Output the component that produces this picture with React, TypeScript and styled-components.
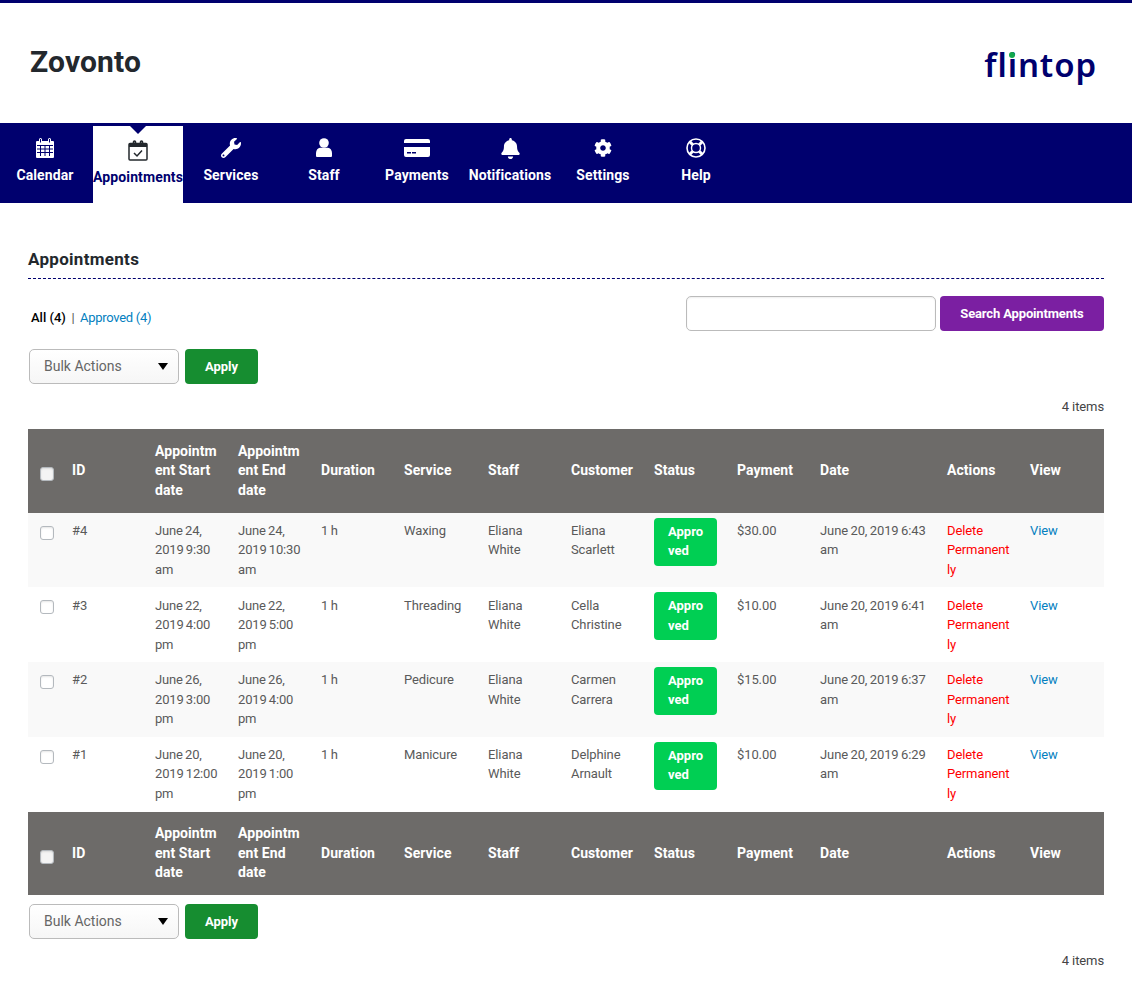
import React from 'react';
import styled, { createGlobalStyle } from 'styled-components';
import { FaBell, FaCog, FaWrench } from 'react-icons/fa';

const NAVY = '#00006e';
const LINK = '#0480c0';

const GlobalStyle = createGlobalStyle`
    html, body {
        margin: 0;
        padding: 0;
        background: #fff;
        font-family: Roboto, "Liberation Sans", sans-serif;
    }
`

const Page = styled.div`
    width: 1132px;
`

const Header = styled.header`
    height: 120px;
    border-top: 3px solid ${NAVY};
    display: flex;
    justify-content: space-between;
    align-items: flex-start;
    padding: 0 35px 0 30px;
    box-sizing: content-box;
    width: 1067px;
`

const Title = styled.h1`
    margin: 41px 0 0;
    font-size: 30px;
    line-height: 36px;
    font-weight: 700;
    letter-spacing: 0.15px;
    color: #23282d;
`

const Logo = styled.div`
    position: relative;
    margin-top: 38px;
    font-family: "Noto Sans", sans-serif;
    font-size: 33px;
    line-height: 48px;
    font-weight: 600;
    letter-spacing: 0.9px;
    color: ${NAVY};

    &::after {
        content: "";
        position: absolute;
        left: 25px;
        top: 11px;
        width: 6px;
        height: 6px;
        border-radius: 50%;
        background: #12a84c;
    }
`

const Nav = styled.nav`
    height: 80px;
    box-sizing: border-box;
    border-top: 3px solid ${NAVY};
    background: ${NAVY};
    display: flex;
    gap: 3px;
`

const Tab = styled.a<{ $active?: boolean }>`
    position: relative;
    width: 90px;
    display: flex;
    flex-direction: column;
    align-items: center;
    padding-top: ${p => (p.$active ? '14px' : '12px')};
    box-sizing: border-box;
    background: ${p => (p.$active ? '#fff' : 'transparent')};
    color: ${p => (p.$active ? NAVY : '#fff')};
    font-size: 14px;
    font-weight: 700;
    letter-spacing: 0.12px;
    white-space: nowrap;

    ${p => p.$active && `
        &::before {
            content: "";
            position: absolute;
            top: 0;
            left: 37px;
            border-left: 8px solid transparent;
            border-right: 8px solid transparent;
            border-top: 8px solid ${NAVY};
        }
    `}
`

const TabIcon = styled.span<{ $active?: boolean }>`
    height: 20px;
    margin-bottom: 7px;
    display: flex;
    align-items: center;
    justify-content: center;
    font-size: 20px;
    color: ${p => (p.$active ? '#23282d' : '#fff')};
`

const TabLabel = styled.span`
    line-height: 20px;
`

const Main = styled.main`
    padding: 46px 28px 0;
`

const Heading = styled.h2`
    margin: 0;
    padding-bottom: 8px;
    border-bottom: 1px dashed ${NAVY};
    font-size: 17px;
    line-height: 21px;
    font-weight: 700;
    letter-spacing: 0.3px;
    color: #23282d;
`

const FilterRow = styled.div`
    display: flex;
    justify-content: space-between;
    align-items: center;
    margin-top: 17px;
`

const Filters = styled.div`
    padding: 8px 0 0 3px;
    font-size: 13px;
    color: #555;
    display: flex;
    gap: 5.5px;
`

const CurrentFilter = styled.b`
    color: #000;
    font-weight: 500;
`

const FilterLink = styled.a`
    color: ${LINK};
    letter-spacing: -0.3px;
`

const SearchBox = styled.div`
    display: flex;
    gap: 4px;
`

const SearchInput = styled.input`
    width: 250px;
    height: 35px;
    box-sizing: border-box;
    border: 1px solid #bbb;
    border-radius: 5px;
    background: #fff;
    box-shadow: inset 0 1px 2px rgba(0, 0, 0, 0.07);
`

const Button = styled.button<{ $color: string }>`
    height: 35px;
    border: 0;
    border-radius: 4px;
    background: ${p => p.$color};
    color: #fff;
    font-family: inherit;
    font-size: 13px;
    font-weight: 700;
`

const SearchButton = styled(Button)`
    width: 164px;
    letter-spacing: -0.15px;
`

const ApplyButton = styled(Button)`
    width: 73px;
`

const BulkRow = styled.div`
    display: flex;
    gap: 6px;
    padding-left: 1px;
    margin-top: 18px;
`

const FooterBulkRow = styled(BulkRow)`
    margin-top: 9px;
`

const SelectWrap = styled.div`
    position: relative;
    width: 150px;
    height: 35px;

    &::after {
        content: "";
        position: absolute;
        right: 11px;
        top: 14px;
        border-left: 5px solid transparent;
        border-right: 5px solid transparent;
        border-top: 7px solid #000;
        pointer-events: none;
    }
`

const Select = styled.select`
    appearance: none;
    width: 100%;
    height: 100%;
    box-sizing: border-box;
    padding: 0 14px 2px;
    border: 1px solid #bbb;
    border-radius: 5px;
    background: linear-gradient(#fff, #f6f6f6);
    color: #666;
    font-family: inherit;
    font-size: 14px;
`

const ItemCount = styled.div`
    margin-top: 13px;
    height: 32px;
    text-align: right;
    font-size: 13px;
    line-height: 19px;
    letter-spacing: -0.1px;
    color: #444;
`

const FooterCount = styled(ItemCount)`
    margin-top: 12px;
`

const Table = styled.table`
    width: 1076px;
    table-layout: fixed;
    border-collapse: collapse;
`

const HeadRow = styled.tr`
    background: #6d6b69;
`

const Th = styled.th`
    padding: 12.5px 10px;
    text-align: left;
    vertical-align: middle;
    color: #fff;
    font-size: 14px;
    line-height: 19.6px;
    font-weight: 700;
    letter-spacing: 0.06px;
    overflow-wrap: break-word;
`

const Row = styled.tr`
    &:nth-child(odd) {
        background: #f9f9f9;
    }
`

const Td = styled.td`
    padding: 8.1px 10px;
    vertical-align: top;
    color: #5a5a5a;
    font-size: 13px;
    line-height: 19.5px;
    letter-spacing: -0.1px;
    word-spacing: -0.7px;
    overflow-wrap: break-word;
`

const TimeTd = styled(Td)`
    letter-spacing: -0.18px;
`

const CheckTh = styled(Th)`
    padding: 0 0 0 12px;
`

const CheckTd = styled(Td)`
    padding: 13px 0 0 12px;
`

const Checkbox = styled.input.attrs({ type: 'checkbox' })<{ $head?: boolean }>`
    appearance: none;
    display: block;
    width: 14px;
    height: 14px;
    margin: ${p => (p.$head ? '7px 0 0' : '0')};
    border: 1px solid #b4b9be;
    border-radius: 3px;
    background: ${p => (p.$head ? '#f4f4f4' : '#fff')};
    box-shadow: inset 0 1px 2px rgba(0, 0, 0, 0.1);
`

const Badge = styled.span`
    display: block;
    margin-top: -3.3px;
    padding: 4px 10px 5px 14px;
    border-radius: 4px;
    background: #00cf53;
    color: #fff;
    font-weight: 700;
    letter-spacing: 0;
`

const DeleteLink = styled.a`
    color: #f00;
`

const ViewLink = styled.a`
    color: ${LINK};
`

const CalendarIcon = () => (
    <svg width="20" height="20" viewBox="0 0 20 20">
        <path fill="#fff" d="M2 3h2V1.500a1.500 1.500 0 0 1 3 0V3h6V1.500a1.500 1.500 0 0 1 3 0V3h2a1 1 0 0 1 1 1v15a1 1 0 0 1-1 1H2a1 1 0 0 1-1-1V4a1 1 0 0 1 1-1z" />
        <path stroke={NAVY} strokeWidth="1" d="M2 7.500h16M2 11h16M2 14.500h16M5.500 7.500V18M10 7.500V18M14.500 7.500V18" />
        <path stroke={NAVY} strokeWidth="1" fill="none" d="M5.500 1v3.500M14.500 1v3.500" />
    </svg>
);

const CalendarCheckIcon = () => (
    <svg width="20" height="21" viewBox="0 0 20 21" fill="none" stroke="#23282d">
        <rect x="1" y="3.500" width="18" height="16.500" rx="1" strokeWidth="1.500" />
        <path fill="#23282d" stroke="none" d="M1 3h18v4H1z" />
        <path strokeWidth="1.600" d="M5.500 5V2a1 1 0 0 1 2 0v3M12.500 5V2a1 1 0 0 1 2 0v3" />
        <path strokeWidth="1.500" d="M6 13l3 3 5-5.500" />
    </svg>
);

const UserIcon = () => (
    <svg width="16" height="20" viewBox="0 0 16 20" fill="#fff">
        <circle cx="8" cy="5" r="4.800" />
        <path d="M1 19a1 1 0 0 1-1-1v-3c0-3 2-5 4-5.200h8c2 .2 4 2.200 4 5.200v3a1 1 0 0 1-1 1z" />
    </svg>
);

const CardIcon = () => (
    <svg width="26" height="20" viewBox="0 0 26 20" fill="#fff">
        <path d="M2 1h22a2 2 0 0 1 2 2v2H0V3a2 2 0 0 1 2-2z" />
        <path d="M0 9h26v8a2 2 0 0 1-2 2H2a2 2 0 0 1-2-2zm3 5v1.500h4V14zm5 0v1.500h4V14z" fillRule="evenodd" />
    </svg>
);

const HelpIcon = () => (
    <svg width="20" height="20" viewBox="0 0 20 20" fill="none" stroke="#fff">
        <circle cx="10" cy="10" r="9" strokeWidth="1.600" />
        <circle cx="10" cy="10" r="4.500" strokeWidth="1.400" />
        <path strokeWidth="3" d="M6.800 6.800L3.800 3.800M13.200 6.800l3-3M6.800 13.200l-3 3M13.200 13.200l3 3" />
    </svg>
);

const tabs = [
    { label: 'Calendar', icon: <CalendarIcon /> },
    { label: 'Appointments', icon: <CalendarCheckIcon />, active: true },
    { label: 'Services', icon: <FaWrench /> },
    { label: 'Staff', icon: <UserIcon /> },
    { label: 'Payments', icon: <CardIcon /> },
    { label: 'Notifications', icon: <FaBell size={21} /> },
    { label: 'Settings', icon: <FaCog size={18} /> },
    { label: 'Help', icon: <HelpIcon /> },
];

const columns = ['ID', 'Appointment Start date', 'Appointment End date', 'Duration', 'Service', 'Staff', 'Customer', 'Status', 'Payment', 'Date', 'Actions', 'View'];
const columnWidths = [34, 83, 83, 83, 83, 84, 83, 83, 83, 83, 127, 83, 84];

const appointments = [
    { id: '#4', start: 'June 24, 2019 9:30 am', end: 'June 24, 2019 10:30 am', service: 'Waxing', customer: 'Eliana Scarlett', payment: '$30.00', date: 'June 20, 2019 6:43 am' },
    { id: '#3', start: 'June 22, 2019 4:00 pm', end: 'June 22, 2019 5:00 pm', service: 'Threading', customer: 'Cella Christine', payment: '$10.00', date: 'June 20, 2019 6:41 am' },
    { id: '#2', start: 'June 26, 2019 3:00 pm', end: 'June 26, 2019 4:00 pm', service: 'Pedicure', customer: 'Carmen Carrera', payment: '$15.00', date: 'June 20, 2019 6:37 am' },
    { id: '#1', start: 'June 20, 2019 12:00 pm', end: 'June 20, 2019 1:00 pm', service: 'Manicure', customer: 'Delphine Arnault', payment: '$10.00', date: 'June 20, 2019 6:29 am' },
];

const HeadCells = () => (
    <HeadRow>
        <CheckTh><Checkbox $head /></CheckTh>
        {columns.map(c => <Th key={c}>{c}</Th>)}
    </HeadRow>
);

const BulkActions = ({ as: Wrap }: { as: typeof BulkRow }) => (
    <Wrap>
        <SelectWrap>
            <Select defaultValue="bulk">
                <option value="bulk">Bulk Actions</option>
            </Select>
        </SelectWrap>
        <ApplyButton $color="#168d30">Apply</ApplyButton>
    </Wrap>
);

const App = () => {
    return (
        <Page>
            <GlobalStyle />
            <Header>
                <Title>Zovonto</Title>
                <Logo>flintop</Logo>
            </Header>
            <Nav>
                {tabs.map(t => (
                    <Tab key={t.label} $active={t.active}>
                        <TabIcon $active={t.active}>{t.icon}</TabIcon>
                        <TabLabel>{t.label}</TabLabel>
                    </Tab>
                ))}
            </Nav>
            <Main>
                <Heading>Appointments</Heading>
                <FilterRow>
                    <Filters>
                        <CurrentFilter>All (4)</CurrentFilter>
                        <span>|</span>
                        <FilterLink>Approved (4)</FilterLink>
                    </Filters>
                    <SearchBox>
                        <SearchInput />
                        <SearchButton $color="#7b1fa2">Search Appointments</SearchButton>
                    </SearchBox>
                </FilterRow>
                <BulkActions as={BulkRow} />
                <ItemCount>4 items</ItemCount>
                <Table>
                    <colgroup>
                        {columnWidths.map((w, i) => <col key={i} width={w} />)}
                    </colgroup>
                    <thead>
                        <HeadCells />
                    </thead>
                    <tbody>
                        {appointments.map(a => (
                            <Row key={a.id}>
                                <CheckTd><Checkbox /></CheckTd>
                                <Td>{a.id}</Td>
                                <TimeTd>{a.start}</TimeTd>
                                <TimeTd>{a.end}</TimeTd>
                                <Td>1 h</Td>
                                <Td>{a.service}</Td>
                                <Td>Eliana White</Td>
                                <Td>{a.customer}</Td>
                                <Td><Badge>Approved</Badge></Td>
                                <Td>{a.payment}</Td>
                                <Td>{a.date}</Td>
                                <Td><DeleteLink>Delete Permanently</DeleteLink></Td>
                                <Td><ViewLink>View</ViewLink></Td>
                            </Row>
                        ))}
                    </tbody>
                    <tfoot>
                        <HeadCells />
                    </tfoot>
                </Table>
                <BulkActions as={FooterBulkRow} />
                <FooterCount>4 items</FooterCount>
            </Main>
        </Page>
    );
}

export default App;
